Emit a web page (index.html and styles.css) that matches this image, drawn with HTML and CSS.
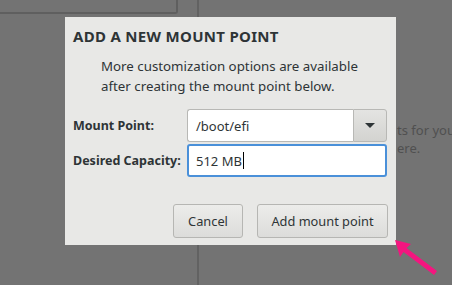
FILE: index.html
```html
<!DOCTYPE html>
<html>
<head>
<meta charset="utf-8">
<link rel="stylesheet" href="styles.css">
</head>
<body>
<div class="backdrop">
  <div class="left-pane">
    <div class="top-box"></div>
  </div>
  <div class="divider"></div>
  <div class="right-pane">
    <p class="hint">ts for you<br>ere.</p>
  </div>
</div>

<div class="dialog">
  <h1 class="title">ADD A NEW MOUNT POINT</h1>
  <p class="info">More customization options are available<br>after creating the mount point below.</p>
  <div class="form">
    <label class="label">Mount Point:</label>
    <div class="combo">
      <div class="combo-entry">/boot/efi</div>
      <div class="combo-btn"><span class="caret"></span></div>
    </div>
    <label class="label">Desired Capacity:</label>
    <div class="entry focused">512 MB<span class="cursor"></span></div>
  </div>
  <div class="actions">
    <button class="btn cancel">Cancel</button>
    <button class="btn add">Add mount point</button>
  </div>
</div>

<svg class="pointer" width="60" height="45" viewBox="0 0 60 45">
  <path d="M4 2 L20 6 L15.5 10 L46 33 L43 37 L12.5 14 L9 19 Z" fill="#f4157f"/>
</svg>
</body>
</html>
```

FILE: styles.css
```css
html, body {
  margin: 0;
  padding: 0;
}
body {
  width: 452px;
  height: 285px;
  overflow: hidden;
  background: #737373;
  position: relative;
  font-family: "Noto Sans", "DejaVu Sans", sans-serif;
  color: #2e3436;
}
.backdrop {
  display: flex;
  height: 285px;
}
.left-pane {
  width: 197px;
  flex: none;
}
.top-box {
  width: 176px;
  height: 12px;
  border-right: 2px solid #5f5f5f;
  border-bottom: 2px solid #5f5f5f;
  border-bottom-right-radius: 3px;
}
.divider {
  width: 2px;
  background: #626262;
  flex: none;
}
.right-pane {
  flex: 1;
  padding-left: 198px;
}
.hint {
  margin: 121px 0 0 0;
  font-size: 13px;
  line-height: 18px;
  color: #505050;
  white-space: nowrap;
}
.dialog {
  position: absolute;
  left: 65px;
  top: 17px;
  width: 331px;
  height: 228px;
  box-sizing: border-box;
  background: #e8e8e6;
  padding: 9px 8px 0 8px;
}
.title {
  margin: 0;
  font-size: 15px;
  font-weight: 700;
  letter-spacing: 0.3px;
  line-height: 20px;
  color: #2e3436;
}
.info {
  margin: 10px 0 0 28px;
  font-size: 13.3px;
  line-height: 20px;
  color: #2e3436;
}
.form {
  margin-top: 13px;
  display: grid;
  grid-template-columns: 114px 200px;
  grid-template-rows: 33px 33px;
  row-gap: 2px;
  align-items: center;
}
.label {
  font-size: 12.5px;
  font-weight: 700;
  color: #2e3436;
}
.combo {
  display: flex;
  height: 33px;
}
.combo-entry {
  flex: 1;
  background: #fff;
  border: 1px solid #b8b8b5;
  border-right: none;
  border-radius: 3px 0 0 3px;
  font-size: 13px;
  padding-left: 8px;
  display: flex;
  align-items: center;
}
.combo-btn {
  width: 32px;
  border: 1px solid #b8b8b5;
  border-radius: 0 3px 3px 0;
  background: linear-gradient(#e4e4e2, #d3d3d0);
  display: flex;
  align-items: center;
  justify-content: center;
}
.caret {
  width: 0;
  height: 0;
  border-left: 5px solid transparent;
  border-right: 5px solid transparent;
  border-top: 5px solid #2e3436;
}
.entry {
  height: 33px;
  box-sizing: border-box;
  background: #fff;
  border: 2px solid #4a90d9;
  border-radius: 3px;
  font-size: 13px;
  padding-left: 7px;
  display: flex;
  align-items: center;
}
.cursor {
  display: inline-block;
  width: 1px;
  height: 17px;
  background: #000;
  margin-left: 1px;
}
.actions {
  margin-top: 27px;
  display: flex;
  justify-content: flex-end;
  gap: 14px;
}
.btn {
  height: 34px;
  box-sizing: border-box;
  border: 1px solid #b6b6b3;
  border-radius: 3px;
  background: linear-gradient(#ececea, #dcdcda);
  font-family: "Noto Sans", "DejaVu Sans", sans-serif;
  font-size: 12.8px;
  color: #2e3436;
  padding: 0;
}
.cancel { width: 70px; }
.add { width: 131px; }
.pointer {
  position: absolute;
  left: 391px;
  top: 238px;
}
```
